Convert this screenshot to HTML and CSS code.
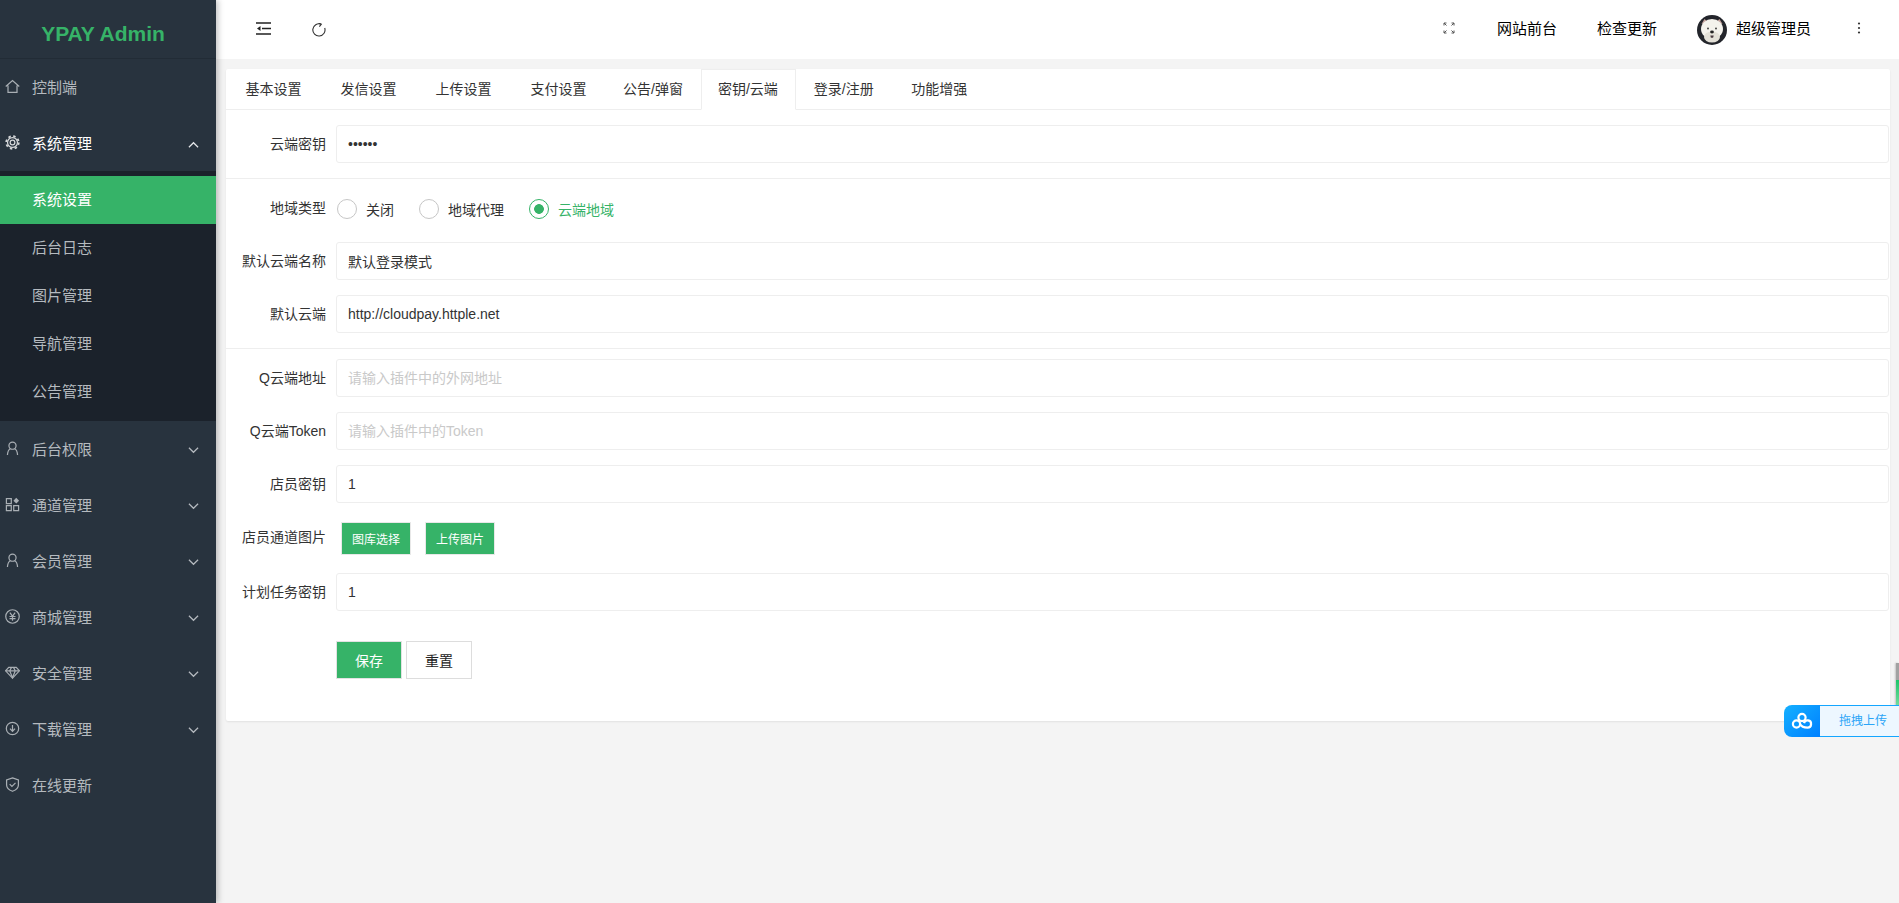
FILE: index.html
```html
<!DOCTYPE html>
<html lang="zh-CN">
  <head>
    <meta charset="UTF-8" />
    <meta name="viewport" content="width=device-width, initial-scale=1.0" />
    <title>YPAY Admin</title>
    <link rel="stylesheet" href="styles.css">
  </head>
  <body>
    <aside class="sidebar">
      <div class="logo">YPAY Admin</div>

      <a class="nav-item">
        <svg class="nav-icon" viewBox="0 0 16 16"><path d="M.8 8 8 1.600 15.200 8M3.200 7v7.300h9.600V7"/></svg>
        <span>控制端</span>
      </a>

      <a class="nav-item nav-open">
        <svg class="nav-icon" viewBox="0 0 16 16"><circle cx="8" cy="8" r="5.300"/><circle cx="8" cy="8" r="2.500"/><circle class="gear-teeth" cx="8" cy="8" r="6.700"/></svg>
        <span>系统管理</span>
        <svg class="nav-arrow" viewBox="0 0 12 8"><path d="M1 6.500 6 1.500l5 5"/></svg>
      </a>
      <div class="subnav">
        <a class="sub-item sub-active">系统设置</a>
        <a class="sub-item">后台日志</a>
        <a class="sub-item">图片管理</a>
        <a class="sub-item">导航管理</a>
        <a class="sub-item">公告管理</a>
      </div>

      <a class="nav-item">
        <svg class="nav-icon" viewBox="0 0 16 16"><circle cx="8" cy="5" r="3.800"/><path d="M2.600 15c.2-3.600 1.400-6 3-6.800M13.400 15c-.2-3.600-1.400-6-3-6.800"/></svg>
        <span>后台权限</span>
        <svg class="nav-arrow" viewBox="0 0 12 8"><path d="M1 1.500l5 5 5-5"/></svg>
      </a>
      <a class="nav-item">
        <svg class="nav-icon" viewBox="0 0 16 16"><path d="M1.500 1.800h5.200v5.200H1.500zM1.500 9.300h5.200v5.200H1.500zM9.300 9.300h5.200v5.200H9.300z"/><path class="icon-fill" d="M12 .8l3 3.100-3 3.100-3-3.100z"/></svg>
        <span>通道管理</span>
        <svg class="nav-arrow" viewBox="0 0 12 8"><path d="M1 1.500l5 5 5-5"/></svg>
      </a>
      <a class="nav-item">
        <svg class="nav-icon" viewBox="0 0 16 16"><circle cx="8" cy="5" r="3.800"/><path d="M2.600 15c.2-3.600 1.400-6 3-6.800M13.400 15c-.2-3.600-1.400-6-3-6.800"/></svg>
        <span>会员管理</span>
        <svg class="nav-arrow" viewBox="0 0 12 8"><path d="M1 1.500l5 5 5-5"/></svg>
      </a>
      <a class="nav-item">
        <svg class="nav-icon" viewBox="0 0 16 16"><circle cx="8" cy="8" r="7.200"/><path d="M5.200 3.800 8 7.600l2.800-3.800M4.800 8h6.400M4.800 10.200h6.400M8 7.600v5"/></svg>
        <span>商城管理</span>
        <svg class="nav-arrow" viewBox="0 0 12 8"><path d="M1 1.500l5 5 5-5"/></svg>
      </a>
      <a class="nav-item">
        <svg class="nav-icon" viewBox="0 0 16 16"><path d="M4 2.500h8l3.400 3.700L8 14 .6 6.200z"/><path d="M.8 6.200h14.400M5 6.200 8 13.600l3-7.400M5 6.200l2-3.700M11 6.200 9 2.500"/></svg>
        <span>安全管理</span>
        <svg class="nav-arrow" viewBox="0 0 12 8"><path d="M1 1.500l5 5 5-5"/></svg>
      </a>
      <a class="nav-item">
        <svg class="nav-icon" viewBox="0 0 16 16"><circle cx="8" cy="8" r="6.600"/><path d="M8 4.200v6.400M5.300 8.200 8 11l2.700-2.800"/></svg>
        <span>下载管理</span>
        <svg class="nav-arrow" viewBox="0 0 12 8"><path d="M1 1.500l5 5 5-5"/></svg>
      </a>
      <a class="nav-item">
        <svg class="nav-icon" viewBox="0 0 16 16"><path d="M8 .9l6.300 2.200v5.300c0 3.200-3 5.500-6.300 6.800-3.300-1.300-6.300-3.600-6.300-6.800V3.100z"/><path d="M5 7.600 7.400 10l3.800-3.800"/></svg>
        <span>在线更新</span>
      </a>
    </aside>

    <div class="main">
      <header class="topbar">
        <svg class="top-icon" viewBox="0 0 15 13"><path d="M0 1h15M0 12h15M6 6.500h9"/><path class="icon-solid" d="M1 6.500 4.500 4v5z"/></svg>
        <svg class="top-icon refresh" viewBox="0 0 14 14"><path d="M12.700 5A6.100 6.100 0 1 1 9 1.200"/><path d="M6.500 0 9.300 1.200 7.400 3.600"/></svg>

        <div class="top-right">
          <svg class="full-icon" viewBox="0 0 12 12"><path d="M1 3.500V1h2.500M8.500 1H11v2.500M1 8.500V11h2.500M8.500 11H11V8.500M1 1l2.500 2.500M11 1 8.500 3.500M1 11l2.500-2.500M11 11 8.500 8.500"/></svg>
          <a class="top-link">网站前台</a>
          <a class="top-link">检查更新</a>
          <div class="user">
            <svg class="avatar" viewBox="0 0 30 30">
              <circle cx="15" cy="15" r="15" fill="#23252b"/>
              <path d="M4.500 9 7.500 4l4 3.500zM25.500 9 22.500 4l-4 3.500z" fill="#c4a29c"/>
              <ellipse cx="15" cy="14" rx="11" ry="10" fill="#f4f2ec"/>
              <ellipse cx="15" cy="22" rx="8" ry="5.500" fill="#e4e1d8"/>
              <circle cx="11" cy="13.500" r=".9" fill="#333"/>
              <circle cx="19" cy="13.500" r=".9" fill="#333"/>
              <ellipse cx="15" cy="17" rx="1.900" ry="1.400" fill="#222"/>
              <path d="M13.300 20.500h3.400l-.6 2.200h-2.200z" fill="#4a3c40"/>
            </svg>
            <span>超级管理员</span>
          </div>
          <svg class="more-icon" viewBox="0 0 4 12"><circle cx="2" cy="1.500" r="1.100"/><circle cx="2" cy="6" r="1.100"/><circle cx="2" cy="10.500" r="1.100"/></svg>
        </div>
      </header>

      <div class="content">
        <div class="card">
          <ul class="tabs">
            <li>基本设置</li>
            <li>发信设置</li>
            <li>上传设置</li>
            <li>支付设置</li>
            <li class="tab-notice">公告/弹窗</li>
            <li class="tab-active">密钥/云端</li>
            <li>登录/注册</li>
            <li>功能增强</li>
          </ul>

          <form class="settings">
            <div class="form-row">
              <label>云端密钥</label>
              <input type="password" value="123456" />
            </div>
            <hr />

            <div class="form-row">
              <label>地域类型</label>
              <div class="radios">
                <span class="radio"><i></i>关闭</span>
                <span class="radio"><i></i>地域代理</span>
                <span class="radio radio-on"><i></i>云端地域</span>
              </div>
            </div>
            <div class="form-row">
              <label>默认云端名称</label>
              <input type="text" value="默认登录模式" />
            </div>
            <div class="form-row">
              <label>默认云端</label>
              <input type="text" value="http://cloudpay.httple.net" />
            </div>
            <hr />

            <div class="form-row">
              <label>Q云端地址</label>
              <input type="text" placeholder="请输入插件中的外网地址" />
            </div>
            <div class="form-row">
              <label>Q云端Token</label>
              <input type="text" placeholder="请输入插件中的Token" />
            </div>
            <div class="form-row">
              <label>店员密钥</label>
              <input type="text" value="1" />
            </div>
            <div class="form-row pic-row">
              <label>店员通道图片</label>
              <button type="button" class="btn-small">图库选择</button>
              <button type="button" class="btn-small">上传图片</button>
            </div>
            <div class="form-row">
              <label>计划任务密钥</label>
              <input type="text" value="1" />
            </div>

            <div class="actions">
              <button type="button" class="btn btn-save">保存</button>
              <button type="button" class="btn btn-reset">重置</button>
            </div>
          </form>
        </div>
      </div>
    </div>

    <div class="edge-bar"></div>
    <div class="upload-float">
      <div class="upload-logo">
        <svg viewBox="0 0 22 18"><circle cx="11" cy="5.500" r="3.600"/><circle cx="5.500" cy="12" r="3.600"/><path d="M9 12c1 2 2.500 3.600 7.500 3.600a3.600 3.600 0 1 0-3.500-4.500"/></svg>
      </div>
      <div class="upload-text">拖拽上传</div>
    </div>
  </body>
</html>
```

FILE: styles.css
```css
/* Reset */
* {
  margin: 0;
  padding: 0;
  box-sizing: border-box;
  font-family: "Liberation Sans", "Noto Sans CJK SC", sans-serif;
}

body {
  display: flex;
  height: 100vh;
  overflow: hidden;
  background-color: #f4f4f4;
  font-size: 14px;
  color: #333;
}

/* Sidebar */
.sidebar {
  width: 216px;
  flex-shrink: 0;
  background-color: #28333e;
  box-shadow: 2px 0 6px rgba(0, 0, 0, 0.25);
  position: relative;
  z-index: 2;
}

.logo {
  height: 59px;
  padding: 3px 10px 0 0;
  line-height: 61px;
  text-align: center;
  font-size: 21px;
  font-weight: bold;
  color: #36b368;
  border-bottom: 1px solid #222c36;
}

.nav-item {
  display: flex;
  align-items: center;
  height: 56px;
  padding: 0 17px 2px 5px;
  font-size: 15px;
  color: #b5babf;
}

.nav-item span {
  margin-left: 12px;
  flex: 1;
}

.nav-open {
  color: #fff;
}

.nav-icon {
  width: 15px;
  height: 15px;
  fill: none;
  stroke: #a9afb4;
  stroke-width: 1.300;
}

.nav-open .nav-icon {
  stroke: #d5d8da;
}

.gear-teeth {
  stroke-width: 1.900;
  stroke-dasharray: 2.600 2.660;
}

.icon-fill {
  fill: #a9afb4;
  stroke: none;
}

.nav-arrow {
  width: 11px;
  height: 8px;
  fill: none;
  stroke: #b5babf;
  stroke-width: 1.300;
  margin-top: 3px;
}

.nav-open .nav-arrow {
  stroke: #e6e8ea;
  margin-top: 5px;
}

.subnav {
  padding: 5px 0;
  background-color: #1b222b;
}

.sub-item {
  display: block;
  height: 48px;
  line-height: 48px;
  padding-left: 32px;
  font-size: 15px;
  color: #b5babf;
}

.sub-active {
  background-color: #36b368;
  color: #fff;
}

/* Topbar */
.main {
  flex: 1;
  min-width: 0;
  display: flex;
  flex-direction: column;
}

.topbar {
  display: flex;
  align-items: center;
  height: 59px;
  flex-shrink: 0;
  padding-left: 40px;
  background-color: #fff;
}

.top-icon {
  width: 15px;
  height: 13px;
  fill: none;
  stroke: #222;
  stroke-width: 1.400;
  margin-top: -2px;
}

.icon-solid {
  fill: #222;
  stroke: none;
}

.refresh {
  width: 14px;
  height: 14px;
  margin-left: 41px;
  margin-top: 0;
  stroke-width: 1.100;
  stroke: #333;
}

.top-right {
  margin-left: auto;
  display: flex;
  align-items: center;
  padding-right: 38px;
}

.full-icon {
  width: 12px;
  height: 12px;
  fill: none;
  stroke: #555;
  stroke-width: 1;
  margin-right: 42px;
  margin-top: -3px;
}

.top-link {
  font-size: 15px;
  color: #000;
  margin-right: 40px;
  margin-top: -4px;
}

.user {
  display: flex;
  align-items: center;
  font-size: 15px;
  color: #000;
  margin-right: 46px;
}

.user span {
  margin-top: -4px;
}

.avatar {
  width: 30px;
  height: 30px;
  margin-right: 9px;
}

.more-icon {
  width: 4px;
  height: 12px;
  fill: #333;
  margin-top: -3px;
}

/* Card */
.content {
  padding: 10px 9px 0 10px;
}

.card {
  height: 652px;
  background-color: #fff;
  border-radius: 2px;
  box-shadow: 0 1px 2px rgba(0, 0, 0, 0.08);
}

.tabs {
  display: flex;
  height: 41px;
  list-style: none;
  border-bottom: 1px solid #eee;
}

.tabs li {
  padding: 0 19.500px;
  line-height: 41px;
  color: #333;
}

.tabs .tab-notice {
  margin: 0 -1px 0 -2.500px;
}

.tabs .tab-active {
  height: 41px;
  padding: 0 17.500px 0 15.500px;
  background-color: #fff;
  border-left: 1px solid #eee;
  border-right: 1px solid #eee;
  border-bottom: 1px solid #fff;
  border-top: 1px solid #eee;
  line-height: 39px;
}

.tab-active + li {
  padding-left: 17.500px;
  padding-right: 18px;
}

/* Form */
.settings {
  padding-top: 15px;
}

.form-row {
  display: flex;
  align-items: center;
  min-height: 38px;
  margin-bottom: 15px;
  padding-right: 1px;
}

.form-row label {
  width: 110px;
  padding-right: 10px;
  margin-top: -2px;
  text-align: right;
  white-space: nowrap;
  color: #333;
}

.form-row input {
  flex: 1;
  height: 38px;
  padding: 0 11px;
  border: 1px solid #eee;
  border-radius: 3px;
  outline: none;
  font-size: 14px;
  color: #333;
}

.form-row input::placeholder {
  color: #c9c9c9;
}

.settings hr {
  border: none;
  border-top: 1px solid #eee;
  margin-bottom: 10px;
}

.radios {
  display: flex;
  align-items: center;
  padding-left: 1px;
  padding-top: 1px;
}

.radio {
  display: flex;
  align-items: center;
  margin-right: 25px;
  color: #333;
}

.radio i {
  width: 20px;
  height: 20px;
  margin-right: 9px;
  border: 1px solid #c6c6c6;
  border-radius: 50%;
}

.radio-on {
  color: #36b368;
}

.radio-on i {
  border-color: #36b368;
  background: radial-gradient(circle, #36b368 0, #36b368 4.500px, #fff 5.200px);
}

.pic-row {
  min-height: 40px;
}

.pic-row label {
  margin-top: -4px;
}

.btn-small {
  width: 68px;
  height: 31px;
  margin-left: 6px;
  margin-right: 10px;
  border: none;
  background-color: #36b368;
  color: #fff;
  font-size: 12px;
  box-shadow: 0 0 0 1px #e8e8e8;
}

.actions {
  display: flex;
  align-items: center;
  padding-left: 110px;
  padding-top: 15px;
}

.btn {
  height: 38px;
  font-size: 14px;
  cursor: pointer;
}

.btn-save {
  width: 66px;
  border: 1px solid #e2e2e2;
  background-color: #36b368;
  color: #fff;
}

.btn-reset {
  width: 66px;
  margin-left: 4px;
  border: 1px solid #ddd;
  background-color: #fff;
  color: #222;
}

/* Floating widgets */
.edge-bar {
  position: absolute;
  top: 663px;
  right: 0;
  width: 3px;
  height: 58px;
  background: linear-gradient(#a2a2a2 0, #a2a2a2 30%, #1fc66a 30%, #a5e8bd 100%);
  box-shadow: -1px 0 2px rgba(0, 0, 0, 0.2);
}

.upload-float {
  position: absolute;
  top: 705px;
  right: 0;
  width: 115px;
  height: 32px;
  display: flex;
  z-index: 3;
}

.upload-logo {
  width: 36px;
  display: flex;
  align-items: center;
  justify-content: center;
  background: linear-gradient(135deg, #14b0ff, #0080ff);
  border-radius: 8px 0 0 8px;
}

.upload-logo svg {
  width: 22px;
  height: 18px;
  fill: none;
  stroke: #fff;
  stroke-width: 2.200;
}

.upload-text {
  flex: 1;
  padding-left: 19px;
  line-height: 30px;
  font-size: 12px;
  color: #2ba5f7;
  background-color: #edf7ff;
  border-top: 1px solid #14a6ff;
  border-bottom: 1px solid #14a6ff;
}
```
